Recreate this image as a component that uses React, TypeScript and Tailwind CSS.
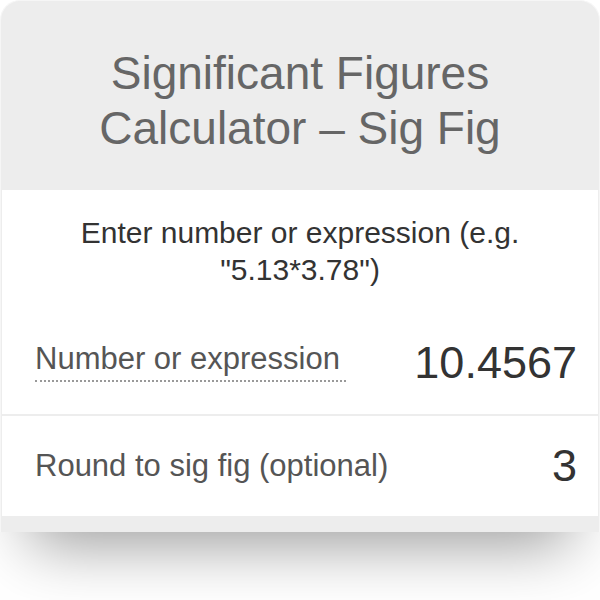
import React from "react";

const font = { fontFamily: '"Liberation Sans", Arial, sans-serif' };

export default function App() {
    return (
        <div className="w-[600px] h-[600px] bg-white overflow-hidden" style={font}>
            <div className="w-[600px] rounded-t-[20px] bg-[#ededed] border border-b-0 border-[#f6f6f6] pb-[16px] shadow-[0_42px_60px_-30px_rgba(0,0,0,0.4)]">
                {/* header */}
                <div className="h-[189px] flex items-center justify-center pt-[10px]">
                    <h1 className="text-center text-[46px] leading-[55px] text-[#666666] font-normal">
                        Significant Figures<br/>Calculator – Sig Fig
                    </h1>
                </div>

                <div className="mx-[1px] flex flex-col gap-[2px]">
                    <div className="bg-white h-[224px] pt-[24px] flex flex-col">
                        <p className="text-center text-[30px] leading-[37px] text-[#333333] px-[40px]">
                            Enter number or expression (e.g. "5.13*3.78")
                        </p>
                        <div className="flex-1 flex items-center justify-between pl-[33px] pr-[21px] pt-[20px]">
                            <span className="text-[31px] leading-[36px] text-[#555555] border-b-2 border-dotted border-[#999999] pb-[3px] pr-[6px]">
                                Number or expression
                            </span>
                            <span className="text-[45px] leading-[50px] text-[#333333] pt-[4px]">10.4567</span>
                        </div>
                    </div>

                    <div className="bg-white h-[100px] flex items-center justify-between pl-[33px] pr-[21px]">
                        <span className="text-[31px] leading-[36px] text-[#555555]">Round to sig fig (optional)</span>
                        <span className="text-[45px] leading-[50px] text-[#333333]">3</span>
                    </div>
                </div>
            </div>
        </div>
    );
}
